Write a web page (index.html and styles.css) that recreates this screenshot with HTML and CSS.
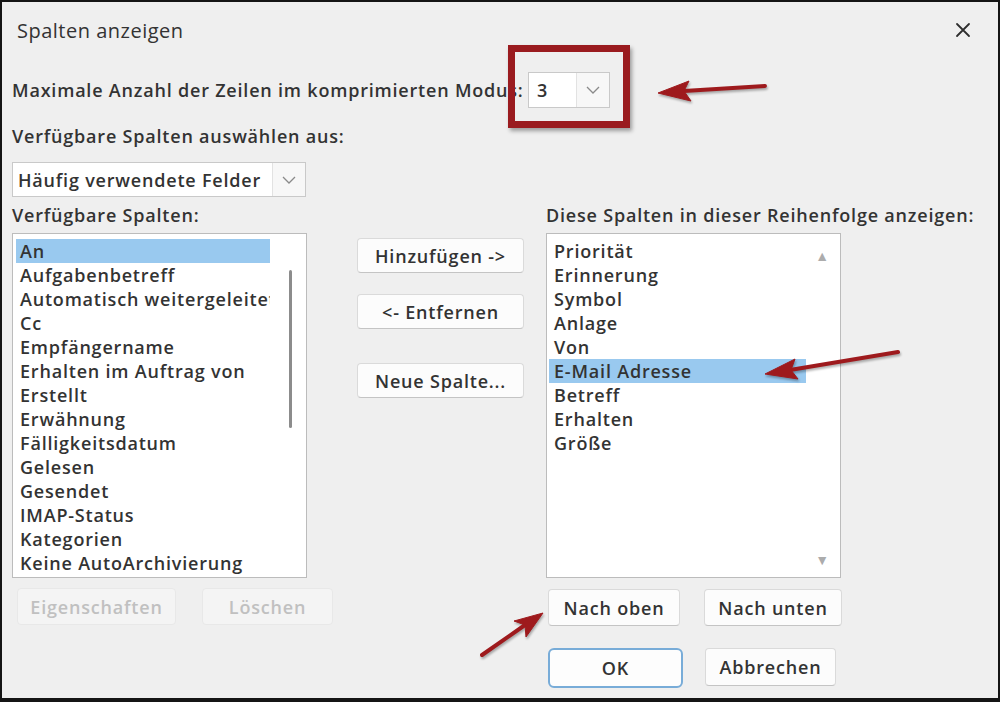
FILE: index.html
```html
<!DOCTYPE html>
<html lang="de">
<head>
    <meta charset="UTF-8">
    <meta name="viewport" content="width=device-width, initial-scale=1.0">
    <title>Spalten anzeigen</title>
    <link rel="stylesheet" href="styles.css">
</head>
<body>

    <div class="dialog">
        <!-- Title bar -->
        <div class="title-bar">
            <span class="title">Spalten anzeigen</span>
            <svg class="close-icon" width="16" height="16" viewBox="0 0 16 16">
                <path d="M2 2 L14 14 M14 2 L2 14" stroke="#2e2e2e" stroke-width="1.8" stroke-linecap="round"/>
            </svg>
        </div>

        <!-- Max rows -->
        <div class="row-max">
            <span class="max-label">Maximale Anzahl der Zeilen im komprimierten Modus:</span>
            <div class="combo combo-small">
                <span class="combo-value">3</span>
                <span class="combo-arrow">
                    <svg width="14" height="8" viewBox="0 0 14 8"><path d="M1 1 L7 7 L13 1" fill="none" stroke="#8a8a8a" stroke-width="1.3"/></svg>
                </span>
            </div>
        </div>

        <div class="label label-source">Verfügbare Spalten auswählen aus:</div>
        <div class="combo combo-wide">
            <span class="combo-value">Häufig verwendete Felder</span>
            <span class="combo-arrow">
                <svg width="14" height="8" viewBox="0 0 14 8"><path d="M1 1 L7 7 L13 1" fill="none" stroke="#8a8a8a" stroke-width="1.3"/></svg>
            </span>
        </div>

        <!-- Columns -->
        <div class="columns">
            <div class="col-left">
                <div class="label">Verfügbare Spalten:</div>
                <div class="listbox listbox-left">
                    <div class="item selected">An</div>
                    <div class="item">Aufgabenbetreff</div>
                    <div class="item">Automatisch weitergeleitet</div>
                    <div class="item">Cc</div>
                    <div class="item">Empfängername</div>
                    <div class="item">Erhalten im Auftrag von</div>
                    <div class="item">Erstellt</div>
                    <div class="item">Erwähnung</div>
                    <div class="item">Fälligkeitsdatum</div>
                    <div class="item">Gelesen</div>
                    <div class="item">Gesendet</div>
                    <div class="item">IMAP-Status</div>
                    <div class="item">Kategorien</div>
                    <div class="item">Keine AutoArchivierung</div>
                    <div class="scroll-thumb"></div>
                </div>
                <div class="btn-row btn-row-left">
                    <button class="btn btn-disabled btn-props">Eigenschaften</button>
                    <button class="btn btn-disabled btn-delete">Löschen</button>
                </div>
            </div>

            <div class="col-middle">
                <button class="btn btn-mid">Hinzufügen -&gt;</button>
                <button class="btn btn-mid">&lt;- Entfernen</button>
                <button class="btn btn-mid btn-new">Neue Spalte...</button>
            </div>

            <div class="col-right">
                <div class="label">Diese Spalten in dieser Reihenfolge anzeigen:</div>
                <div class="listbox listbox-right">
                    <div class="item">Priorität</div>
                    <div class="item">Erinnerung</div>
                    <div class="item">Symbol</div>
                    <div class="item">Anlage</div>
                    <div class="item">Von</div>
                    <div class="item selected">E-Mail Adresse</div>
                    <div class="item">Betreff</div>
                    <div class="item">Erhalten</div>
                    <div class="item">Größe</div>
                    <span class="scroll-up">&#9650;</span>
                    <span class="scroll-down">&#9660;</span>
                </div>
                <div class="btn-row btn-row-right">
                    <button class="btn btn-up">Nach oben</button>
                    <button class="btn btn-down">Nach unten</button>
                </div>
                <div class="btn-row btn-row-ok">
                    <button class="btn btn-ok">OK</button>
                    <button class="btn btn-cancel">Abbrechen</button>
                </div>
            </div>
        </div>

        <!-- Annotations -->
        <div class="highlight-box"></div>
        <svg class="annotations" width="1000" height="702" viewBox="0 0 1000 702">
            <g fill="#9e1a1d" stroke="#9e1a1d">
                <line x1="765" y1="86" x2="684" y2="91" stroke-width="4" stroke-linecap="round"/>
                <polygon points="658,93 691,101 684,91 689,81" stroke-width="1"/>
                <line x1="898" y1="352" x2="790" y2="370" stroke-width="4" stroke-linecap="round"/>
                <polygon points="765,374 798,379 791,370 795,359" stroke-width="1"/>
                <line x1="482" y1="655" x2="525" y2="625" stroke-width="4" stroke-linecap="round"/>
                <polygon points="543,613 526,637 525,625 514,621" stroke-width="1"/>
            </g>
        </svg>
    </div>

</body>
</html>
```

FILE: styles.css
```css
/* General Page Style */
body {
    margin: 0;
    padding: 0;
    font-family: "Open Sans", "Noto Sans", sans-serif;
    color: #333;
}

/* Dialog frame */
.dialog {
    position: relative;
    width: 1000px;
    height: 702px;
    box-sizing: border-box;
    border: 2px solid #151515;
    border-bottom-width: 4px;
    background-color: #efefef;
    padding: 0 10px;
    font-size: 18px;
    font-weight: 600;
    letter-spacing: 0.8px;
}

/* Title bar */
.title-bar {
    display: flex;
    align-items: center;
    justify-content: space-between;
    height: 56px;
    padding: 0 17px 0 5px;
}

.title {
    font-size: 20px;
    font-weight: 400;
    letter-spacing: 0.5px;
    color: #333;
}

/* Max rows line */
.row-max {
    display: flex;
    align-items: center;
    margin-top: 14px;
}

.max-label {
    width: 516px;
    white-space: nowrap;
    overflow: visible;
}

.label {
    height: 24px;
    line-height: 24px;
    white-space: nowrap;
}

.label-source {
    margin-top: 16px;
}

/* Combo boxes */
.combo {
    display: flex;
    align-items: stretch;
    box-sizing: border-box;
    border: 1px solid #c9c9c9;
    background-color: #fff;
}

.combo-value {
    flex: 1;
    display: flex;
    align-items: center;
    padding-left: 8px;
    white-space: nowrap;
    overflow: hidden;
}

.combo-arrow {
    display: flex;
    align-items: center;
    justify-content: center;
    width: 32px;
    border-left: 1px solid #e2e2e2;
    background-color: #f7f7f7;
}

.combo-small {
    width: 82px;
    height: 36px;
}

.combo-wide {
    width: 294px;
    height: 35px;
    margin-top: 14px;
}

.combo-wide .combo-value {
    padding-left: 5px;
}

/* Three columns */
.columns {
    display: grid;
    grid-template-columns: 295px 239px 300px;
    margin-top: 6px;
}

.col-middle {
    display: flex;
    flex-direction: column;
    align-items: flex-start;
    padding: 35px 22px 0 50px;
}

/* List boxes */
.listbox {
    position: relative;
    box-sizing: border-box;
    height: 345px;
    margin-top: 6px;
    border: 1px solid #bcbcbc;
    background-color: #fff;
    padding-top: 5px;
}

.listbox-left {
    padding-left: 3px;
    padding-right: 36px;
}

.listbox-right {
    width: 295px;
    padding-left: 2px;
    padding-right: 34px;
}

.item {
    height: 24px;
    line-height: 24px;
    padding-left: 4px;
    white-space: nowrap;
    overflow: hidden;
}

.listbox-right .item {
    padding-left: 5px;
}

.item.selected {
    background-color: #99c9ef;
}

.scroll-thumb {
    position: absolute;
    left: 276px;
    top: 36px;
    width: 3px;
    height: 158px;
    border-radius: 2px;
    background-color: #8c8c8c;
}

.scroll-up,
.scroll-down {
    position: absolute;
    right: 10px;
    font-size: 14px;
    line-height: 14px;
    color: #acacac;
}

.scroll-up {
    top: 15px;
}

.scroll-down {
    bottom: 10px;
}

/* Buttons */
.btn {
    flex-shrink: 0;
    box-sizing: border-box;
    height: 37px;
    padding: 0;
    font-family: inherit;
    font-size: 18px;
    font-weight: 600;
    letter-spacing: 0.8px;
    color: #333;
    background-color: #fcfcfc;
    border: 1px solid #dadada;
    border-bottom-color: #c4c4c4;
    border-radius: 4px;
}

.btn-mid {
    width: 167px;
    height: 35px;
}

.btn-mid + .btn-mid {
    margin-top: 21px;
}

.btn-mid.btn-new {
    margin-top: 34px;
}

.btn-row {
    display: flex;
    white-space: nowrap;
}

.btn-row-left {
    margin-top: 10px;
    padding-left: 5px;
    gap: 26px;
}

.btn-disabled {
    color: #c0c0c0;
    background-color: #f4f4f4;
    border-color: #e8e8e8;
}

.btn-props {
    width: 159px;
}

.btn-delete {
    width: 131px;
}

.btn-row-right {
    margin-top: 11px;
    padding-left: 2px;
    gap: 24px;
}

.btn-up {
    width: 132px;
}

.btn-down {
    width: 138px;
}

.btn-row-ok {
    margin-top: 22px;
    padding-left: 2px;
    gap: 22px;
}

.btn-ok {
    width: 135px;
    height: 40px;
    border: 2px solid #78acd8;
    border-radius: 6px;
    background-color: #fdfdfd;
}

.btn-cancel {
    width: 131px;
    height: 38px;
}

/* Annotations drawn over the dialog */
.highlight-box {
    position: absolute;
    left: 506px;
    top: 43px;
    width: 122px;
    height: 83px;
    box-sizing: border-box;
    border: 7px solid #9a1b1f;
    box-shadow: 2px 3px 4px rgba(0, 0, 0, 0.35);
}

.annotations {
    position: absolute;
    left: -2px;
    top: -2px;
    pointer-events: none;
    filter: drop-shadow(1px 2px 1px rgba(0, 0, 0, 0.3));
}
```
